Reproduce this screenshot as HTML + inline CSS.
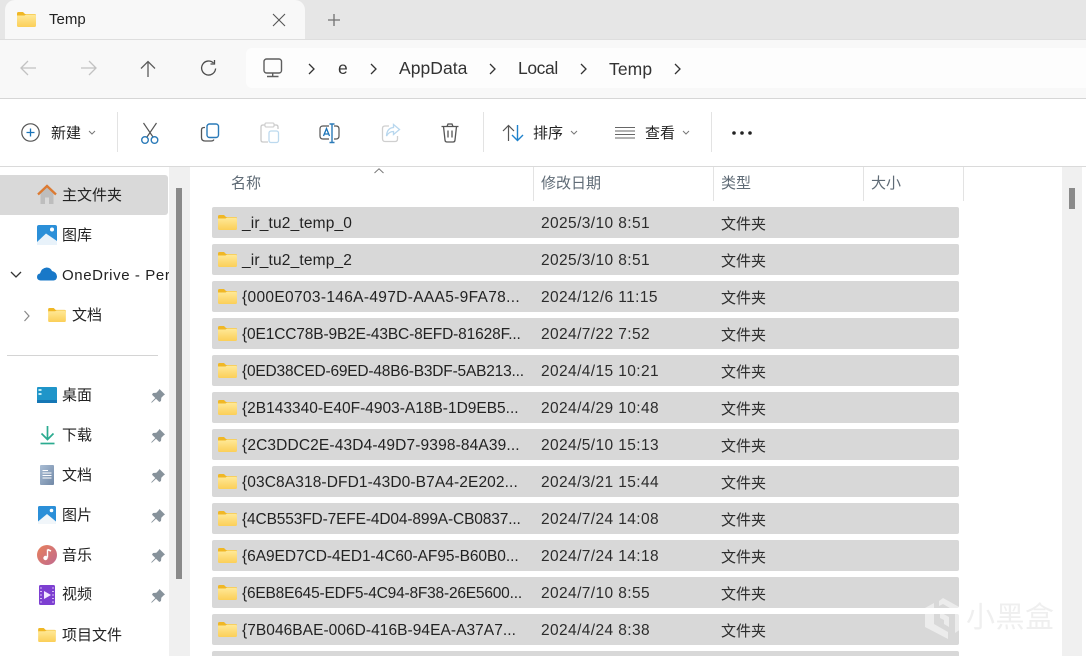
<!DOCTYPE html>
<html><head><meta charset="utf-8"><style>
*{box-sizing:border-box;margin:0;padding:0}
html,body{width:1086px;height:656px;overflow:hidden;background:#fff}
body{position:relative;font-family:"Liberation Sans","Noto Sans CJK SC",sans-serif;color:#1c1c1c}
.a{position:absolute}
.t{position:absolute;white-space:nowrap;line-height:20px;height:20px}
svg{position:absolute;overflow:visible}
.row{position:absolute;left:212px;width:747px;height:31px;background:#d8d8d8;border-radius:2px}
.n{font-size:15.5px;left:242px;color:#222}
.d{font-size:15.5px;left:541px;color:#2c2c2c;letter-spacing:.4px}
.k{font-size:15px;left:721px;color:#2c2c2c;margin-top:1px}
.s{font-size:15px;left:62px;color:#222}
.h{font-size:15px;color:#5f6b76;top:174px}
.sep{position:absolute;width:1px;background:#e3e3e3}
.tb{font-size:15px;color:#222}
</style></head><body>
<svg width="0" height="0" style="position:absolute"><defs>
<linearGradient id="fg" x1="0" y1="0" x2="0" y2="1"><stop offset="0" stop-color="#ffe999"/><stop offset="1" stop-color="#fbcf58"/></linearGradient>
<symbol id="f" viewBox="0 0 19 15"><path d="M0 1.500Q0 0 1.500 0H6L8 2H17.500Q19 2 19 3.500V5H0Z" fill="#f0b725"/><path d="M0 3.500H7.500L9 2.500H17.500Q19 2.500 19 4V13.500Q19 15 17.500 15H1.500Q0 15 0 13.500Z" fill="url(#fg)"/></symbol>
<symbol id="pin" viewBox="0 0 14 14"><path d="M8.500 0L14 5.500L12.500 6.500L10.300 8.800L10 12L8.300 13L5 9.700L.8 13.800L.2 13.200L4.300 9L1 5.700L2 4L5.300 3.700L7.500 1.500Z" fill="#87929b"/></symbol>
</defs></svg>

<!-- tab bar -->
<div class="a" style="left:0;top:0;width:1086px;height:39px;background:#e6e6e6"></div>
<div class="a" style="left:5px;top:0;width:300px;height:40px;background:#f8f8f8;border-radius:10px 10px 0 0"></div>
<svg style="left:17px;top:12px" width="19" height="15"><use href="#f" width="19" height="15"/></svg>
<div class="t" style="left:49px;top:10px;font-size:15px;color:#222">Temp</div>
<svg style="left:272px;top:13px" width="14" height="14"><path d="M1 1L13 13M13 1L1 13" stroke="#555" stroke-width="1.100" fill="none"/></svg>
<svg style="left:327px;top:13px" width="14" height="14"><path d="M7 1V13M1 7H13" stroke="#707070" stroke-width="1.300" fill="none"/></svg>

<!-- nav bar -->
<div class="a" style="left:0;top:39px;width:1086px;height:60px;background:#f8f8f8;border-top:1px solid #dedede;border-bottom:1px solid #d6d6d6"></div>
<div class="a" style="left:246px;top:48px;width:840px;height:40px;background:#fdfdfd;border-radius:6px 0 0 6px"></div>
<svg style="left:20px;top:60px" width="18" height="16"><path d="M1 8H16M8 1L1 8L8 15" stroke="#c2c2c2" stroke-width="1.300" fill="none"/></svg>
<svg style="left:80px;top:60px" width="18" height="16"><path d="M1 8H16M9 1L16 8L9 15" stroke="#c2c2c2" stroke-width="1.300" fill="none"/></svg>
<svg style="left:140px;top:60px" width="16" height="18"><path d="M8 17V1.500M1 8.500L8 1.500L15 8.500" stroke="#5c5c5c" stroke-width="1.300" fill="none"/></svg>
<svg style="left:200px;top:60px" width="17" height="17"><path d="M13.500 3A7 7 0 1 0 15.600 8.500" stroke="#4c4c4c" stroke-width="1.300" fill="none"/><path d="M14.500 0V4H10.500" stroke="#4c4c4c" stroke-width="1.300" fill="none"/></svg>
<svg style="left:263px;top:58px" width="20" height="20"><rect x="1" y="1" width="17.500" height="14" rx="2.500" stroke="#5e5e5e" stroke-width="1.400" fill="none"/><path d="M9.700 15V18M4 18.500H15.500" stroke="#5e5e5e" stroke-width="1.400" fill="none"/></svg>
<svg style="left:308px;top:63px" width="8" height="12"><path d="M1 1L6 6L1 11" stroke="#333" stroke-width="1.300" fill="none"/></svg>
<div class="t" style="left:338px;top:58px;font-size:17.500px;color:#333">e</div>
<svg style="left:370px;top:63px" width="8" height="12"><path d="M1 1L6 6L1 11" stroke="#333" stroke-width="1.300" fill="none"/></svg>
<div class="t" style="left:399px;top:58px;font-size:17.500px;color:#333;letter-spacing:.05px">AppData</div>
<svg style="left:489px;top:63px" width="8" height="12"><path d="M1 1L6 6L1 11" stroke="#333" stroke-width="1.300" fill="none"/></svg>
<div class="t" style="left:518px;top:58px;font-size:17.500px;color:#333;letter-spacing:-.4px">Local</div>
<svg style="left:580px;top:63px" width="8" height="12"><path d="M1 1L6 6L1 11" stroke="#333" stroke-width="1.300" fill="none"/></svg>
<div class="t" style="left:609px;top:59px;font-size:17.500px;color:#333;letter-spacing:.1px">Temp</div>
<svg style="left:674px;top:63px" width="8" height="12"><path d="M1 1L6 6L1 11" stroke="#333" stroke-width="1.300" fill="none"/></svg>

<!-- toolbar -->
<div class="a" style="left:0;top:166px;width:1086px;height:1px;background:#dadada"></div>
<svg style="left:21px;top:123px" width="19" height="19"><circle cx="9.500" cy="9.500" r="8.700" stroke="#555" stroke-width="1.200" fill="none"/><path d="M9.500 5.500V13.500M5.500 9.500H13.500" stroke="#1a73b8" stroke-width="1.300"/></svg>
<div class="t tb" style="left:51px;top:124px">新建</div>
<svg style="left:88px;top:130px" width="8" height="6"><path d="M1 1L4 4L7 1" stroke="#777" fill="none"/></svg>
<div class="sep" style="left:117px;top:112px;height:40px"></div>
<svg style="left:140px;top:122px" width="20" height="22"><path d="M3.500 1L13 15M16.500 1L7 15" stroke="#555" stroke-width="1.200" fill="none"/><circle cx="5" cy="18" r="3.300" stroke="#2a7ab8" stroke-width="1.400" fill="none"/><circle cx="14.500" cy="18" r="3.300" stroke="#2a7ab8" stroke-width="1.400" fill="none"/></svg>
<svg style="left:200px;top:123px" width="20" height="20"><rect x="7" y="1" width="11.500" height="13.500" rx="2.500" stroke="#2a7ab8" stroke-width="1.400" fill="none"/><path d="M5 4.500H4Q1.500 4.500 1.500 7V14.500Q1.500 18 5 18H11Q13.500 18 13.800 16.500" stroke="#555" stroke-width="1.300" fill="none"/></svg>
<svg style="left:260px;top:122px" width="20" height="21"><path d="M5 3H3Q1 3 1 5V18Q1 20 3 20H8M14 3H16Q18 3 18 5V7" stroke="#c9c9c9" stroke-width="1.300" fill="none"/><rect x="5" y="1" width="9" height="4" rx="1" stroke="#c9c9c9" fill="#fff"/><rect x="9" y="9" width="9.500" height="11.500" rx="2" stroke="#bcd9ee" stroke-width="1.300" fill="none"/></svg>
<svg style="left:319px;top:123px" width="22" height="21"><path d="M10 3H4Q1 3 1 6V13Q1 16 4 16H10" stroke="#555" stroke-width="1.200" fill="none"/><path d="M15 3H17Q20 3 20 6V13Q20 16 17 16H15" stroke="#555" stroke-width="1.200" fill="none"/><path d="M4.500 13L7.500 5.500L10.500 13M5.500 11H9.500" stroke="#1a73b8" stroke-width="1.300" fill="none"/><path d="M13 1V19M10.500 1H15.500M10.500 19.500H15.500" stroke="#2a7ab8" stroke-width="1.400" fill="none"/></svg>
<svg style="left:381px;top:123px" width="20" height="20"><path d="M8 3H4Q1.500 3 1.500 5.500V15.500Q1.500 18.500 4 18.500H14Q16.500 18.500 16.500 16V13" stroke="#cfcfcf" stroke-width="1.300" fill="none"/><path d="M12.500 1.500L18.500 6.500L12.500 11.500V8.500Q8 8.500 5.500 13Q6 5 12.500 4.500Z" stroke="#b8d7ee" stroke-width="1.300" fill="none"/></svg>
<svg style="left:441px;top:123px" width="18" height="20"><path d="M.5 3.500H17.500M6 3.500L7 1H11L12 3.500" stroke="#555" stroke-width="1.300" fill="none"/><path d="M2.500 3.500L4 17Q4.200 19 6 19H12Q13.800 19 14 17L15.500 3.500" stroke="#555" stroke-width="1.300" fill="none"/><path d="M7 7.500V14.500M11 7.500V14.500" stroke="#555" stroke-width="1.300"/></svg>
<div class="sep" style="left:483px;top:112px;height:40px"></div>
<svg style="left:502px;top:124px" width="22" height="18"><path d="M6.500 17V1.500M1 7L6.500 1.500L12 7" stroke="#555" stroke-width="1.200" fill="none"/><path d="M15.500 1V16.500M10 11L15.500 16.500L21 11" stroke="#1f82cc" stroke-width="1.400" fill="none"/></svg>
<div class="t tb" style="left:533px;top:124px">排序</div>
<svg style="left:570px;top:130px" width="8" height="6"><path d="M1 1L4 4L7 1" stroke="#777" fill="none"/></svg>
<svg style="left:615px;top:127px" width="20" height="12"><path d="M0 .5H20M0 4H20M0 7.500H20M0 11H20" stroke="#666" stroke-width="1"/></svg>
<div class="t tb" style="left:645px;top:124px">查看</div>
<svg style="left:682px;top:130px" width="8" height="6"><path d="M1 1L4 4L7 1" stroke="#777" fill="none"/></svg>
<div class="sep" style="left:711px;top:112px;height:40px"></div>
<svg style="left:732px;top:131px" width="22" height="4"><circle cx="2" cy="2" r="1.800" fill="#222"/><circle cx="10" cy="2" r="1.800" fill="#222"/><circle cx="18" cy="2" r="1.800" fill="#222"/></svg>

<!-- sidebar -->
<div class="a" style="left:0;top:175px;width:168px;height:40px;background:#d9d9d9;border-radius:0 3px 3px 0"></div>
<div class="a" style="left:169px;top:167px;width:21px;height:489px;background:#f0f0f0"></div>
<div class="a" style="left:176px;top:188px;width:6px;height:391px;background:#8a8a8a"></div>
<svg style="left:37px;top:184px" width="20" height="21"><path d="M3.500 9V20H8V13.500H12V20H16.500V9L10 3Z" fill="#bdbdbd"/><path d="M1 10.500L10 2L19 10.500" stroke="#dc7a32" stroke-width="2.300" fill="none"/></svg>
<div class="t s" style="top:186px">主文件夹</div>
<svg style="left:37px;top:225px" width="20" height="20"><rect width="20" height="20" rx="2" fill="#2b8fd8"/><path d="M0 17L9 8.500L20 16V20H0Z" fill="#e8f2fa"/><circle cx="15" cy="4.500" r="2" fill="#fff"/></svg>
<div class="t s" style="top:226px">图库</div>
<svg style="left:10px;top:271px" width="12" height="8"><path d="M1 1L6 6L11 1" stroke="#333" stroke-width="1.300" fill="none"/></svg>
<svg style="left:37px;top:267px" width="20" height="14"><path d="M3.500 13.500Q0 13 0 10Q0 7 3 6.500Q4.500 1 9.500 .5Q13.500 .5 15 4Q19.500 5 20 9.500Q20 13 16.500 13.500Z" fill="#1878c8"/></svg>
<div class="t s" style="top:266px;letter-spacing:.6px;width:107px;overflow:hidden">OneDrive - Per</div>
<svg style="left:23px;top:310px" width="8" height="12"><path d="M1.500 1L6 6L1.500 11" stroke="#888" stroke-width="1.200" fill="none"/></svg>
<svg style="left:48px;top:308px" width="18" height="14"><use href="#f" width="18" height="14"/></svg>
<div class="t s" style="left:72px;top:306px">文档</div>
<div class="a" style="left:7px;top:355px;width:151px;height:1px;background:#d4d4d4"></div>

<svg style="left:37px;top:387px" width="20" height="16"><rect width="20" height="16" rx="1" fill="#1f95c9"/><rect x="1.500" y="2" width="3" height="2" fill="#bfeaf5"/><rect x="1.500" y="6" width="3" height="2" fill="#bfeaf5"/><rect y="13" width="20" height="3" fill="#1577b5"/></svg>
<div class="t s" style="top:386px">桌面</div>
<svg style="left:40px;top:425px" width="15" height="20"><path d="M7.500 1V14M1.500 8.500L7.500 14.500L13.500 8.500" stroke="#2bab90" stroke-width="1.700" fill="none"/><path d="M.5 18.500H14.500" stroke="#2bab90" stroke-width="1.700"/></svg>
<div class="t s" style="top:426px">下载</div>
<svg style="left:40px;top:465px" width="14" height="20"><defs><linearGradient id="dc" x1="0" y1="0" x2="1" y2="1"><stop offset="0" stop-color="#a9bdd4"/><stop offset="1" stop-color="#7188a6"/></linearGradient></defs><rect width="14" height="20" rx="1" fill="url(#dc)"/><path d="M2.500 5.500H8M2.500 8H11.500M2.500 10.500H11.500M2.500 13H11.500" stroke="#fff" stroke-width="1"/></svg>
<div class="t s" style="top:466px">文档</div>
<svg style="left:38px;top:506px" width="18" height="18"><rect width="18" height="18" rx="1.500" fill="#2b8fd8"/><path d="M0 15.500L9 8L18 15.500V18H0Z" fill="#f1f6fa"/><circle cx="13.500" cy="4.500" r="1.800" fill="#fff"/></svg>
<div class="t s" style="top:506px">图片</div>
<svg style="left:37px;top:545px" width="20" height="20"><defs><linearGradient id="mu" x1="0" y1="0" x2="1" y2="1"><stop offset="0" stop-color="#e8805a"/><stop offset="1" stop-color="#c06a90"/></linearGradient></defs><circle cx="10" cy="10" r="10" fill="url(#mu)"/><path d="M10.500 4.500V12.500" stroke="#fff" stroke-width="1.400"/><path d="M10.500 4.500L14 6" stroke="#fff" stroke-width="1.600"/><circle cx="8.500" cy="13" r="2.200" fill="#fff"/></svg>
<div class="t s" style="top:546px">音乐</div>
<svg style="left:39px;top:585px" width="16" height="20"><rect width="16" height="20" rx="1.500" fill="#7d3fd1"/><path d="M5 6L12 10L5 14Z" fill="#f2e8ff"/><path d="M1 3H3M1 6.500H3M1 10H3M1 13.500H3M1 17H3M13 3H15M13 6.500H15M13 10H15M13 13.500H15M13 17H15" stroke="#d6bdf5" stroke-width="1"/></svg>
<div class="t s" style="top:585px">视频</div>
<svg style="left:38px;top:628px" width="18" height="14"><use href="#f" width="18" height="14"/></svg>
<div class="t s" style="top:626px">项目文件</div>
<svg style="left:151px;top:389px" width="14" height="14"><use href="#pin" width="14" height="14"/></svg>
<svg style="left:151px;top:429px" width="14" height="14"><use href="#pin" width="14" height="14"/></svg>
<svg style="left:151px;top:469px" width="14" height="14"><use href="#pin" width="14" height="14"/></svg>
<svg style="left:151px;top:509px" width="14" height="14"><use href="#pin" width="14" height="14"/></svg>
<svg style="left:151px;top:549px" width="14" height="14"><use href="#pin" width="14" height="14"/></svg>
<svg style="left:151px;top:589px" width="14" height="14"><use href="#pin" width="14" height="14"/></svg>

<!-- header -->
<div class="t h" style="left:231px">名称</div>
<div class="t h" style="left:541px">修改日期</div>
<div class="t h" style="left:721px">类型</div>
<div class="t h" style="left:871px">大小</div>
<svg style="left:374px;top:168px" width="10" height="6"><path d="M.5 5L5 .8L9.500 5" stroke="#777" fill="none"/></svg>
<div class="sep" style="left:533px;top:167px;height:34px"></div>
<div class="sep" style="left:713px;top:167px;height:34px"></div>
<div class="sep" style="left:863px;top:167px;height:34px"></div>
<div class="sep" style="left:963px;top:167px;height:34px"></div>

<!-- rows -->
<div class="row" style="top:207px"></div><svg style="left:218px;top:215px" width="19" height="15"><use href="#f" width="19" height="15"/></svg><div class="t n" style="top:214px;letter-spacing:.17px">_ir_tu2_temp_0</div><div class="t d" style="top:214px">2025/3/10 8:51</div><div class="t k" style="top:214px">文件夹</div>
<div class="row" style="top:244px"></div><svg style="left:218px;top:252px" width="19" height="15"><use href="#f" width="19" height="15"/></svg><div class="t n" style="top:251px;letter-spacing:.17px">_ir_tu2_temp_2</div><div class="t d" style="top:251px">2025/3/10 8:51</div><div class="t k" style="top:251px">文件夹</div>
<div class="row" style="top:281px"></div><svg style="left:218px;top:289px" width="19" height="15"><use href="#f" width="19" height="15"/></svg><div class="t n" style="top:288px;letter-spacing:.33px">{000E0703-146A-497D-AAA5-9FA78...</div><div class="t d" style="top:288px">2024/12/6 11:15</div><div class="t k" style="top:288px">文件夹</div>
<div class="row" style="top:318px"></div><svg style="left:218px;top:326px" width="19" height="15"><use href="#f" width="19" height="15"/></svg><div class="t n" style="top:325px;letter-spacing:-.14px">{0E1CC78B-9B2E-43BC-8EFD-81628F...</div><div class="t d" style="top:325px">2024/7/22 7:52</div><div class="t k" style="top:325px">文件夹</div>
<div class="row" style="top:355px"></div><svg style="left:218px;top:363px" width="19" height="15"><use href="#f" width="19" height="15"/></svg><div class="t n" style="top:362px;letter-spacing:-.2px">{0ED38CED-69ED-48B6-B3DF-5AB213...</div><div class="t d" style="top:362px">2024/4/15 10:21</div><div class="t k" style="top:362px">文件夹</div>
<div class="row" style="top:392px"></div><svg style="left:218px;top:400px" width="19" height="15"><use href="#f" width="19" height="15"/></svg><div class="t n" style="top:399px">{2B143340-E40F-4903-A18B-1D9EB5...</div><div class="t d" style="top:399px">2024/4/29 10:48</div><div class="t k" style="top:399px">文件夹</div>
<div class="row" style="top:429px"></div><svg style="left:218px;top:437px" width="19" height="15"><use href="#f" width="19" height="15"/></svg><div class="t n" style="top:436px;letter-spacing:.14px">{2C3DDC2E-43D4-49D7-9398-84A39...</div><div class="t d" style="top:436px">2024/5/10 15:13</div><div class="t k" style="top:436px">文件夹</div>
<div class="row" style="top:466px"></div><svg style="left:218px;top:474px" width="19" height="15"><use href="#f" width="19" height="15"/></svg><div class="t n" style="top:473px;letter-spacing:.11px">{03C8A318-DFD1-43D0-B7A4-2E202...</div><div class="t d" style="top:473px">2024/3/21 15:44</div><div class="t k" style="top:473px">文件夹</div>
<div class="row" style="top:503px"></div><svg style="left:218px;top:511px" width="19" height="15"><use href="#f" width="19" height="15"/></svg><div class="t n" style="top:510px;letter-spacing:-.14px">{4CB553FD-7EFE-4D04-899A-CB0837...</div><div class="t d" style="top:510px">2024/7/24 14:08</div><div class="t k" style="top:510px">文件夹</div>
<div class="row" style="top:540px"></div><svg style="left:218px;top:548px" width="19" height="15"><use href="#f" width="19" height="15"/></svg><div class="t n" style="top:547px;letter-spacing:-.05px">{6A9ED7CD-4ED1-4C60-AF95-B60B0...</div><div class="t d" style="top:547px">2024/7/24 14:18</div><div class="t k" style="top:547px">文件夹</div>
<div class="row" style="top:577px"></div><svg style="left:218px;top:585px" width="19" height="15"><use href="#f" width="19" height="15"/></svg><div class="t n" style="top:584px;letter-spacing:-.2px">{6EB8E645-EDF5-4C94-8F38-26E5600...</div><div class="t d" style="top:584px">2024/7/10 8:55</div><div class="t k" style="top:584px">文件夹</div>
<div class="row" style="top:614px"></div><svg style="left:218px;top:622px" width="19" height="15"><use href="#f" width="19" height="15"/></svg><div class="t n" style="top:621px;letter-spacing:.05px">{7B046BAE-006D-416B-94EA-A37A7...</div><div class="t d" style="top:621px">2024/4/24 8:38</div><div class="t k" style="top:621px">文件夹</div>
<div class="row" style="top:651px"></div>

<!-- right scrollbar -->
<div class="a" style="left:1062px;top:167px;width:20px;height:489px;background:#f0f0f0"></div>
<div class="a" style="left:1069px;top:188px;width:6px;height:21px;background:#8a8a8a"></div>

<!-- watermark -->
<svg style="left:923px;top:597px" width="40" height="44"><path d="M20 1L38 11V32L32 36V14L20 7L16 9V4Z" fill="#fff" fill-opacity=".5"/><path d="M2 11L11 6V27L25 35V42L2 30Z" fill="#fff" fill-opacity=".5"/><path d="M17 15L26 20V30L21 27V23L17 21Z" fill="#fff" fill-opacity=".5"/></svg>
<div class="t" style="left:966px;top:605px;height:26px;line-height:26px;font-size:29px;letter-spacing:.5px;color:#eaeaea;opacity:.75">小黑盒</div>
</body></html>
